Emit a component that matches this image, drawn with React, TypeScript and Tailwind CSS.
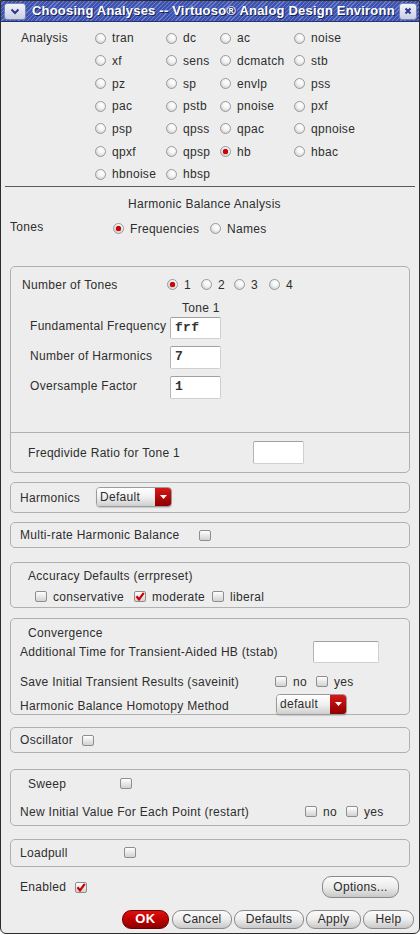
import React from "react";

function Radio({ checked, label, className = "" }: { checked?: boolean; label?: string; className?: string }) {
  return (
    <div className={"flex items-center " + className}>
      <span className="inline-flex w-[11px] h-[11px] shrink-0 items-center justify-center rounded-full border border-[#9a9a9a] bg-[radial-gradient(circle_at_62%_32%,#ffffff_0%,#f4f4f4_40%,#c2c2c2_100%)]">
        {checked && <span className="w-[5px] h-[5px] rounded-full bg-[#d40000] shadow-[0_0_1px_#5a0000]" />}
      </span>
      {label && <span className="ml-[6px] leading-[16px]">{label}</span>}
    </div>
  );
}

function Check({ checked, label, className = "" }: { checked?: boolean; label?: string; className?: string }) {
  return (
    <div className={"flex items-center " + className}>
      <span className="inline-flex w-[12px] h-[11px] shrink-0 items-center justify-center rounded-[2px] border border-[#8e8e8e] bg-gradient-to-b from-[#ffffff] to-[#d2d2d2]">
        {checked && (
          <svg width="10" height="9" viewBox="0 0 10 9">
            <path d="M1.5 4.2 L4 7.4 L8.8 0.8" stroke="#cc0000" strokeWidth="2.2" fill="none" />
          </svg>
        )}
      </span>
      {label && <span className="ml-[6px] leading-[16px]">{label}</span>}
    </div>
  );
}

function Input({ value, className = "" }: { value?: string; className?: string }) {
  return (
    <div
      className={
        "flex items-center bg-white rounded-[2px] border border-[#d0d0d0] border-t-[#a0a0a0] border-l-[#b4b4b4] pl-[4px] font-['Liberation_Mono',monospace] font-bold text-[13px] text-[#333] " +
        className
      }
    >
      {value}
    </div>
  );
}

function Dropdown({ value, className = "" }: { value: string; className?: string }) {
  return (
    <div className={"flex rounded-[4px] border border-[#9a9a9a] overflow-hidden shadow-[0_1px_1px_rgba(0,0,0,0.15)] " + className}>
      <div className="flex-1 flex items-center pl-[3px] bg-gradient-to-b from-[#ffffff] via-[#f0f0f0] to-[#cfcfcf] leading-none">
        {value}
      </div>
      <div className="w-[16px] flex items-center justify-center bg-gradient-to-b from-[#d81818] to-[#8e0000]">
        <svg width="7" height="4" viewBox="0 0 7 4">
          <path d="M0 0 L7 0 L3.5 4 Z" fill="#ffffff" />
        </svg>
      </div>
    </div>
  );
}

function Btn({ children, className = "" }: { children: React.ReactNode; className?: string }) {
  return (
    <div
      className={
        "flex items-center justify-center rounded-[9px] border border-[#8a8a8a] bg-gradient-to-b from-[#fbfbfb] via-[#ececec] to-[#c8c8c8] text-[#2a2a2a] " +
        className
      }
    >
      {children}
    </div>
  );
}

const analyses = [
  ["tran", "dc", "ac", "noise"],
  ["xf", "sens", "dcmatch", "stb"],
  ["pz", "sp", "envlp", "pss"],
  ["pac", "pstb", "pnoise", "pxf"],
  ["psp", "qpss", "qpac", "qpnoise"],
  ["qpxf", "qpsp", "hb", "hbac"],
  ["hbnoise", "hbsp"],
];

const colW = ["w-[71px]", "w-[54px]", "w-[74px]", "w-[80px]"];

export default function App() {
  const box = "mx-[9px] border border-[#b0b0b0] rounded-[5px]";
  return (
    <div className="w-[420px] h-[935px] bg-white font-['Liberation_Sans',Arial,sans-serif] text-[12px] tracking-[0.3px] text-[#2e2e2e]">
      <div className="h-[934px] border border-[#2c2c2c] rounded-b-[6px] bg-[#ededed] flex flex-col overflow-hidden">
        {/* Title bar */}
        <div className="h-[21px] shrink-0 flex items-center bg-[repeating-linear-gradient(135deg,#3e53ad_0px,#3e53ad_2px,#6a7dcf_2px,#6a7dcf_3px)] border-b border-[#27336f]">
          <div className="ml-[3px] w-[22px] h-[17px] rounded-[3px] border border-[#7684b8] bg-gradient-to-b from-[#f2f4fa] to-[#c9cfe2] flex items-center justify-center">
            <svg width="10" height="7" viewBox="0 0 10 7">
              <path d="M1.5 1.5 L5 5 L8.5 1.5" stroke="#2b3a8c" strokeWidth="2" fill="none" />
            </svg>
          </div>
          <div className="ml-[6px] flex-1 overflow-hidden whitespace-nowrap text-white font-bold text-[13px] tracking-[0.2px] [text-shadow:1px_1px_0_#1a2250]">
            Choosing Analyses -- Virtuoso® Analog Design Environn
          </div>
          <div className="mr-[2px] w-[18px] h-[17px] rounded-[3px] border border-[#7684b8] bg-gradient-to-b from-[#f2f4fa] to-[#c9cfe2] flex items-center justify-center">
            <svg width="8" height="8" viewBox="0 0 8 8">
              <path d="M1.5 1.5 L6.5 6.5 M6.5 1.5 L1.5 6.5" stroke="#2b3a8c" strokeWidth="2" fill="none" />
            </svg>
          </div>
        </div>

        {/* Analysis grid */}
        <div className="mt-[5px] flex flex-col">
          {analyses.map((row, ri) => (
            <div key={ri} className="h-[22.67px] flex items-center">
              <div className="w-[94px] pl-[20px] leading-[16px]">{ri === 0 ? "Analysis" : ""}</div>
              {row.map((a, ci) => (
                <Radio key={a} label={a} checked={a === "hb"} className={colW[ci]} />
              ))}
            </div>
          ))}
        </div>

        {/* separator */}
        <div className="mx-[4px] h-[1px] bg-[#5a5a5a]" />

        <div className="mt-[9px] h-[16px] leading-[16px] pl-[127px]">Harmonic Balance Analysis</div>

        <div className="mt-[7px] h-[16px] flex items-start">
          <div className="w-[112px] pl-[9px] leading-[16px]">Tones</div>
          <div className="flex mt-[2px]">
            <Radio checked label="Frequencies" className="w-[97px]" />
            <Radio label="Names" />
          </div>
        </div>

        {/* Box 1 */}
        <div className={box + " mt-[31px]"}>
          <div className="h-[166px] border-b border-[#b0b0b0] flex flex-col">
            <div className="mt-[10px] h-[16px] flex items-center">
              <div className="w-[156px] pl-[11px] leading-[16px]">Number of Tones</div>
              <Radio checked label="1" className="w-[34px]" />
              <Radio label="2" className="w-[33px]" />
              <Radio label="3" className="w-[35px]" />
              <Radio label="4" />
            </div>
            <div className="mt-[8px] h-[14px] leading-[14px] pl-[171px]">Tone 1</div>
            <div className="mt-[2px] h-[22px] flex items-start">
              <div className="w-[159px] pl-[19px] h-[18px] leading-[18px]">Fundamental Frequency</div>
              <Input value="frf" className="w-[51px] h-[22px]" />
            </div>
            <div className="mt-[7px] h-[23px] flex items-start">
              <div className="w-[159px] pl-[19px] h-[20px] leading-[20px]">Number of Harmonics</div>
              <Input value="7" className="w-[51px] h-[23px]" />
            </div>
            <div className="mt-[7px] h-[23px] flex items-start">
              <div className="w-[159px] pl-[19px] h-[20px] leading-[20px]">Oversample Factor</div>
              <Input value="1" className="w-[51px] h-[23px]" />
            </div>
          </div>
          <div className="h-[39px] flex items-start">
            <div className="mt-[8px] w-[242px] pl-[17px] h-[24px] leading-[24px]">Freqdivide Ratio for Tone 1</div>
            <Input className="mt-[8px] w-[51px] h-[23px]" />
          </div>
        </div>

        {/* Harmonics */}
        <div className={box + " mt-[9px] h-[31px] flex items-center"}>
          <div className="w-[85px] pl-[9px] leading-[16px] mt-[1px]">Harmonics</div>
          <Dropdown value="Default" className="w-[76px] h-[20px]" />
        </div>

        {/* Multi-rate */}
        <div className={box + " mt-[9px] h-[26px] flex items-center"}>
          <div className="w-[188px] pl-[9px] leading-[16px] mt-[1px]">Multi-rate Harmonic Balance</div>
          <Check className="mt-[1px]" />
        </div>

        {/* Accuracy */}
        <div className={box + " mt-[14px] h-[46px] flex flex-col"}>
          <div className="mt-[5px] h-[16px] leading-[16px] pl-[17px]">Accuracy Defaults (errpreset)</div>
          <div className="mt-[5px] h-[16px] flex items-center pl-[24px]">
            <Check label="conservative" className="w-[99px]" />
            <Check checked label="moderate" className="w-[78px]" />
            <Check label="liberal" />
          </div>
        </div>

        {/* Convergence */}
        <div className={box + " mt-[10px] h-[97px] flex flex-col"}>
          <div className="mt-[6px] h-[16px] leading-[16px] pl-[17px]">Convergence</div>
          <div className="mt-[1px] h-[21px] flex items-center">
            <div className="w-[302px] pl-[9px] leading-[16px]">Additional Time for Transient-Aided HB (tstab)</div>
            <Input className="w-[66px] h-[22px]" />
          </div>
          <div className="mt-[10px] h-[18px] flex items-center">
            <div className="w-[264px] pl-[9px] leading-[16px]">Save Initial Transient Results (saveinit)</div>
            <Check label="no" className="w-[41px]" />
            <Check label="yes" />
          </div>
          <div className="mt-[3px] h-[20px] flex items-start">
            <div className="w-[265px] pl-[9px] h-[20px] leading-[20px] mt-[2px]">Harmonic Balance Homotopy Method</div>
            <Dropdown value="default" className="w-[71px] h-[21px]" />
          </div>
        </div>

        {/* Oscillator */}
        <div className={box + " mt-[12px] h-[26px] flex items-center"}>
          <div className="w-[71px] pl-[9px] leading-[16px] mt-[1px]">Oscillator</div>
          <Check className="mt-[1px]" />
        </div>

        {/* Sweep */}
        <div className={box + " mt-[16px] h-[57px] flex flex-col"}>
          <div className="mt-[6px] h-[16px] flex items-center">
            <div className="w-[109px] pl-[17px] leading-[16px]">Sweep</div>
            <Check />
          </div>
          <div className="mt-[12px] h-[16px] flex items-center">
            <div className="w-[294px] pl-[9px] leading-[16px]">New Initial Value For Each Point (restart)</div>
            <Check label="no" className="w-[41px]" />
            <Check label="yes" />
          </div>
        </div>

        {/* Loadpull */}
        <div className={box + " mt-[13px] h-[28px] flex items-center"}>
          <div className="w-[113px] pl-[9px] leading-[16px]">Loadpull</div>
          <Check />
        </div>

        {/* Enabled / Options */}
        <div className="mt-[9px] h-[22px] flex items-center">
          <div className="w-[74px] pl-[19px] leading-[16px]">Enabled</div>
          <Check checked className="mt-[2px]" />
          <Btn className="ml-auto mr-[20px] w-[77px] h-[22px] rounded-[8px]">Options...</Btn>
        </div>

        {/* Bottom buttons */}
        <div className="mt-[12px] h-[19px] flex items-stretch justify-end pr-[5px]">
          <div className="w-[47px] flex items-center justify-center rounded-[9px] border border-[#6a0000] bg-gradient-to-b from-[#e01010] via-[#c00000] to-[#8a0000] text-white font-bold text-[13px] tracking-[0.5px]">
            OK
          </div>
          <Btn className="ml-[3px] w-[60px]">Cancel</Btn>
          <Btn className="ml-[2px] w-[70px]">Defaults</Btn>
          <Btn className="ml-[2px] w-[55px]">Apply</Btn>
          <Btn className="ml-[2px] w-[51px]">Help</Btn>
        </div>
      </div>
    </div>
  );
}
